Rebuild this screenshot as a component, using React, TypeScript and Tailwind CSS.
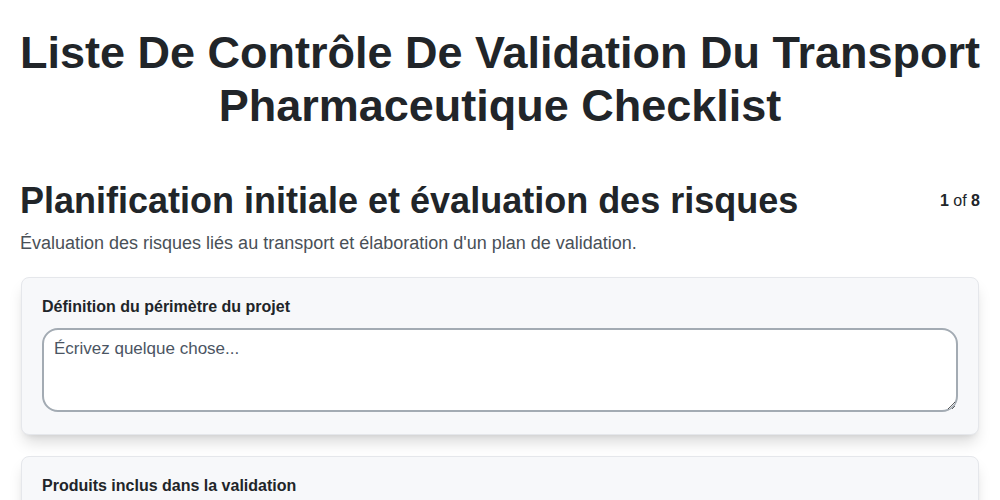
export default function App() {
  const fields = [
    "Définition du périmètre du projet",
    "Produits inclus dans la validation",
    "Évaluation des conditions de transport",
  ];
  return (
    <div className="min-h-screen bg-white px-5 text-[#212529] [font-family:'Liberation_Sans',Arial,sans-serif]">
      <h1 className="-mx-3 pt-[26px] text-center text-[45px] font-bold leading-[53px]">
        Liste De Contrôle De Validation Du Transport Pharmaceutique Checklist
      </h1>
      <div className="mt-[47px] flex items-start justify-between">
        <h2 className="text-[36px] font-bold leading-[43px]">
          Planification initiale et évaluation des risques
        </h2>
        <div className="pt-[10px] text-base">
          <span className="font-bold">1</span> of <span className="font-bold">8</span>
        </div>
      </div>
      <p className="mt-[8px] text-[18px] leading-[26px] text-[#495057]">
        Évaluation des risques liés au transport et élaboration d'un plan de validation.
      </p>
      <div className="mx-px mt-[21px] flex flex-col gap-[21px]">
        {fields.map((f) => (
          <section
            key={f}
            className="rounded-lg border border-[#e5e7eb] bg-[#f7f8fa] px-5 pt-[19px] pb-[22px] shadow-[0_10px_15px_-3px_rgba(0,0,0,0.15),0_4px_6px_-4px_rgba(0,0,0,0.1)]"
          >
            <label className="block text-base font-bold leading-5 text-[#212529]">{f}</label>
            <textarea
              placeholder="Écrivez quelque chose..."
              className="mt-[11px] block h-[84px] w-full rounded-2xl border-2 border-[#a3abb3] bg-white px-2.5 py-1.5 text-[17px] placeholder:text-[#4b5563] outline-none"
            />
          </section>
        ))}
      </div>
    </div>
  );
}
